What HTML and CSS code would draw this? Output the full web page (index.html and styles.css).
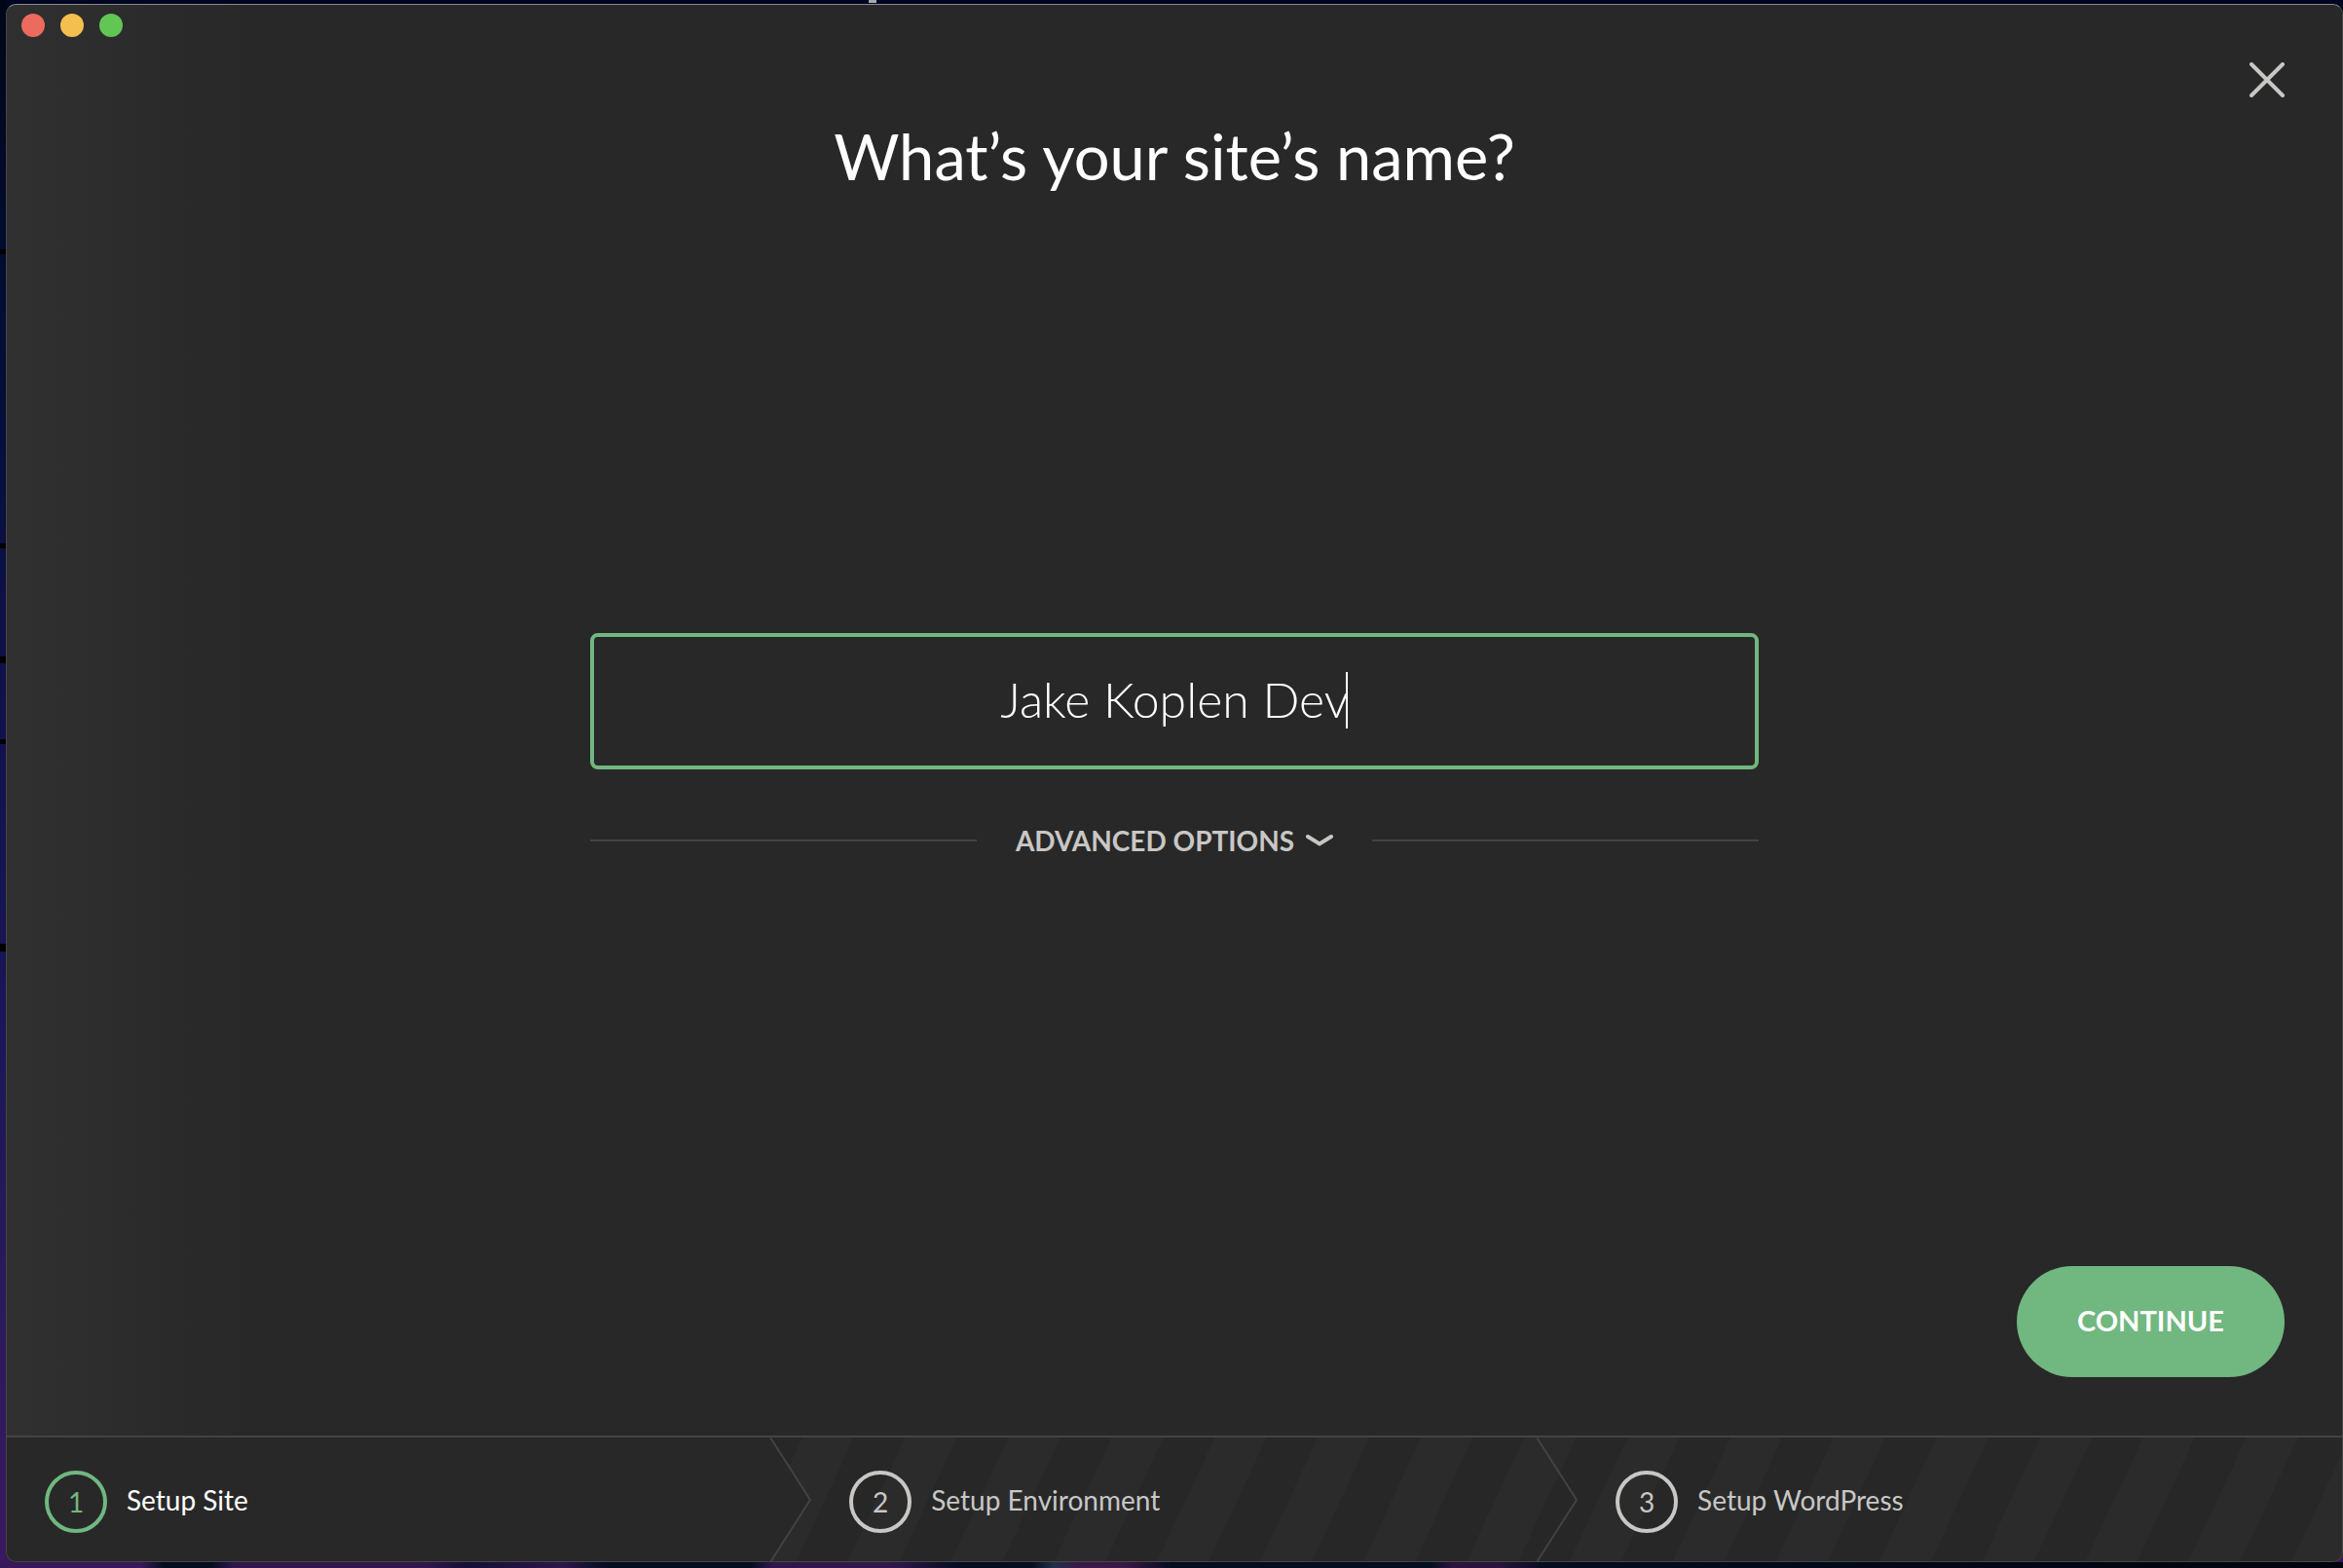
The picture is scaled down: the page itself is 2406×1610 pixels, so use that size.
FILE: index.html
```html
<!DOCTYPE html>
<html lang="en">
<head>
<meta charset="utf-8">
<title>Set up a site</title>
<link rel="stylesheet" href="styles.css">
</head>
<body>
<div class="window">
  <main class="main">
    <header class="titlebar">
      <div class="lights">
        <button class="light light-close" type="button" aria-label="Close window"></button>
        <button class="light light-minimize" type="button" aria-label="Minimize window"></button>
        <button class="light light-zoom" type="button" aria-label="Zoom window"></button>
      </div>
      <button class="dismiss" type="button" aria-label="Cancel setup">
        <svg width="36" height="36" viewBox="0 0 36 36" aria-hidden="true"><path d="M2 2L34 34M34 2L2 34"/></svg>
      </button>
    </header>
    <h1 class="title"><label for="site-name">What’s your site’s name?</label></h1>
    <form class="form" id="site-form">
      <div class="field">
        <input class="field-input" id="site-name" type="text" value="Jake Koplen Dev">
        <span class="caret"></span>
      </div>
      <div class="divider">
        <button class="advanced" type="button">ADVANCED OPTIONS
          <svg width="28" height="12" viewBox="0 0 28 12" aria-hidden="true"><path d="M2 2L14 9.500L26 2"/></svg>
        </button>
      </div>
    </form>
    <div class="actions">
      <button class="continue" type="submit" form="site-form">CONTINUE</button>
    </div>
  </main>
  <ol class="steps">
    <li class="step step-current">
      <svg class="step-edge" viewBox="0 0 42 128" preserveAspectRatio="none" aria-hidden="true"><path class="edge-fill" d="M0 0L41 64L0 128Z"/><path class="edge-line" d="M0 0L41 64L0 128"/></svg>
      <span class="step-number">1</span><span class="step-name">Setup Site</span>
    </li>
    <li class="step">
      <svg class="step-edge" viewBox="0 0 42 128" preserveAspectRatio="none" aria-hidden="true"><path class="edge-line" d="M0 0L41 64L0 128"/></svg>
      <span class="step-number">2</span><span class="step-name">Setup Environment</span>
    </li>
    <li class="step">
      <span class="step-number">3</span><span class="step-name">Setup WordPress</span>
    </li>
  </ol>
</div>
</body>
</html>
```
FILE: styles.css
```css
:root {
  --panel: #282828;
  --line: #434343;
  --green: #70b780;
  --muted: #c8c7c5;
}

* { box-sizing: border-box; }

/* The desktop wallpaper shows as a thin rim around the window. */
body {
  display: flex;
  min-height: 100vh;
  margin: 0;
  padding: 4px 0 6px 6px;
  background:
    linear-gradient(#a4a8b0, #a4a8b0) 37.2% 0 / 8px 3px no-repeat,
    linear-gradient(90deg, #3a1858 0 6%, #040c20 7% 9%, #32174e 10% 18%, #140f38 20%, #2c154a 24%, #040c20 26% 32%, #32174e 33% 38%, #040c20 41% 44%, #22304a 45%, #3a1848 46% 48%, #040c20 50% 61%, #28143c 62% 64%, #040c20 66%, #01040c 100%) 0 100% / 100% 6px no-repeat,
    linear-gradient(#010722, #010722) 6px 0 / 100% 8px no-repeat,
    linear-gradient(transparent 0 256px, #000 256px 261px, transparent 261px 558px, #000 558px 563px, transparent 563px 674px, #000 674px 681px, transparent 681px 759px, #000 759px 764px, transparent 764px 969px, #000 969px 977px, transparent 977px) 0 0 / 6px 100% no-repeat,
    linear-gradient(#010718 0, #030d34 20%, #10124c 45%, #1a1658 65%, #281a5a 80%, #3a1860 100%);
  color: #fff;
  font-family: Lato, "Noto Sans", sans-serif;
}

button {
  padding: 0;
  border: 0;
  background: none;
  color: inherit;
  font: inherit;
}

svg {
  fill: none;
  stroke: var(--muted);
  stroke-linecap: round;
  stroke-width: 4;
}

.window {
  display: flex;
  position: relative;
  flex: 1;
  flex-direction: column;
  overflow: hidden;
  border-radius: 10px;
  background: var(--panel);
}

.window::after {
  position: absolute;
  inset: 0;
  border: 1px solid #464646;
  border-top-color: #8a8a8c;
  border-radius: 10px;
  content: "";
  pointer-events: none;
}

.main {
  display: flex;
  flex: 1;
  flex-direction: column;
  padding: 0 60px 60px;
  background: linear-gradient(90deg, #303030, rgba(48, 48, 48, 0) 240px);
}

.titlebar {
  display: flex;
  justify-content: space-between;
  height: 116px;
  margin-left: -44px;
  padding-top: 10px;
}

.lights {
  display: flex;
  gap: 16px;
}

.light {
  width: 24px;
  height: 24px;
  border-radius: 50%;
}

.light-close { background: #ed6a5f; }
.light-minimize { background: #f5bf50; }
.light-zoom { background: #62c655; }

.dismiss {
  align-self: flex-start;
  height: 36px;
  margin-top: 50px;
}

.dismiss svg { display: block; }

.title {
  margin: 0;
  font-size: 65px;
  font-weight: 400;
  line-height: 80px;
  text-align: center;
}

.form {
  display: flex;
  flex: 1;
  flex-direction: column;
  justify-content: center;
  gap: 53px;
  width: 100%;
  max-width: 1200px;
  margin: 0 auto;
  padding-top: 32px;
}

.field { position: relative; }

.field-input {
  display: block;
  width: 100%;
  height: 140px;
  padding: 0 0 4px;
  border: 4px solid var(--green);
  border-radius: 8px;
  outline: 0;
  background: transparent;
  color: #fff;
  font: 300 50px Lato, "Noto Sans", sans-serif;
  text-align: center;
}

.caret {
  position: absolute;
  top: 40px;
  left: calc(50% + 176px);
  width: 2px;
  height: 58px;
  background: #fff;
}

.divider {
  display: flex;
  align-items: center;
  gap: 40px;
}

.divider::before,
.divider::after {
  flex: 1;
  height: 2px;
  background: var(--line);
  content: "";
}

.advanced {
  display: flex;
  align-items: center;
  gap: 12px;
  color: var(--muted);
  font-size: 28px;
  font-weight: 700;
  line-height: 40px;
}

.actions {
  display: flex;
  justify-content: flex-end;
}

.continue {
  padding: 0 62px 2px;
  border-radius: 57px;
  background: var(--green);
  font-size: 29px;
  font-weight: 700;
  line-height: 112px;
}

.steps {
  display: grid;
  grid-template-columns: 21fr 20fr 20fr;
  margin: 0;
  padding: 0;
  border-top: 2px solid var(--line);
  background: repeating-linear-gradient(295deg, #2b2b2b 0 48px, #272727 48px 96px);
  list-style: none;
}

.step {
  display: flex;
  position: relative;
  align-items: center;
  gap: 20px;
  height: 128px;
  padding: 4px 40px 0;
  color: var(--muted);
  font-size: 28px;
}

.step-current {
  margin-right: 41px;
  background: var(--panel);
  color: #fff;
}

.step-current .step-edge { right: -42px; }

.step-edge {
  position: absolute;
  top: 0;
  right: -1px;
  width: 42px;
  height: 100%;
  stroke-width: 2;
}

.edge-fill {
  fill: var(--panel);
  stroke: none;
}

.edge-line { stroke: var(--line); }

.step-number {
  width: 64px;
  border: 4px solid;
  border-radius: 50%;
  line-height: 56px;
  text-align: center;
}

.step-name { padding-bottom: 4px; }

.step-current .step-number { color: var(--green); }
```
